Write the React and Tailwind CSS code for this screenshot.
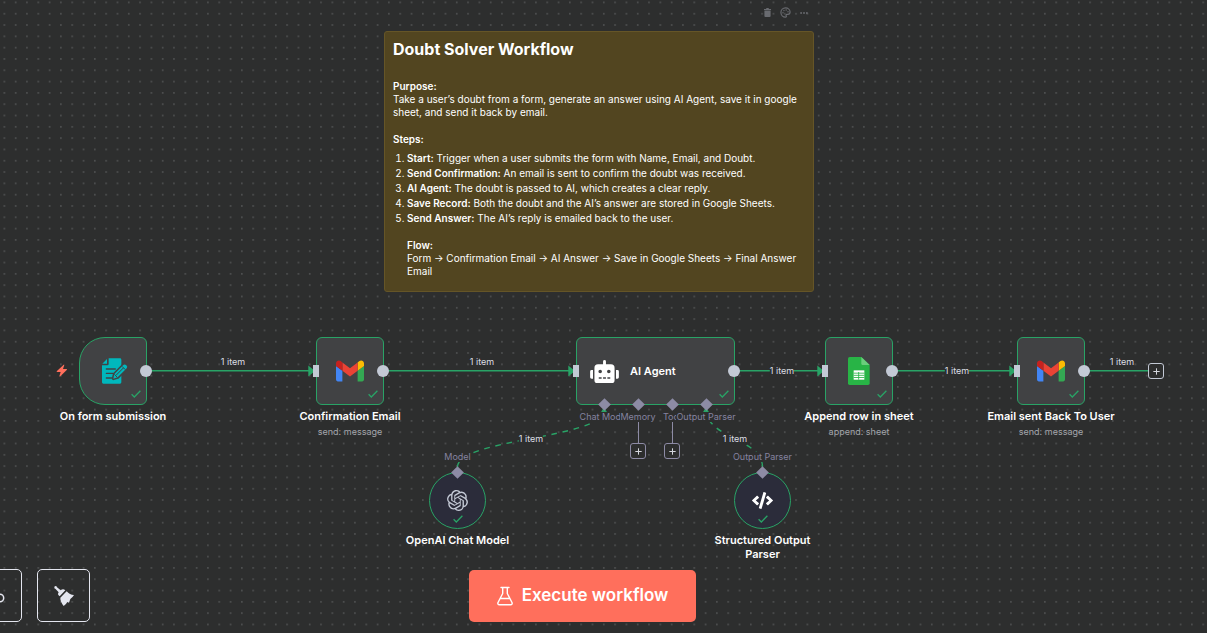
import { FaRobot, FaCode } from "react-icons/fa";
import { SiOpenai } from "react-icons/si";
import { Palette, Ellipsis } from "lucide-react";
import clsx from "clsx";

function DotGrid() {
  return (
    <svg className="absolute inset-0 size-full" aria-hidden="true">
      <defs>
        <pattern id="dots" width="11.31" height="11.31" patternUnits="userSpaceOnUse" x="-1.2" y="-3.2">
          <circle cx="5.6" cy="5.6" r="0.58" fill="#858789" />
        </pattern>
      </defs>
      <rect width="100%" height="100%" fill="url(#dots)" />
    </svg>
  );
}

function Edges() {
  return (
    <svg className="absolute left-0 top-0 h-[633px] w-[1207px]" fill="none" aria-hidden="true">
      <g stroke="#29a366" strokeWidth="1.4">
        <path d="M147 370.8H310M384 370.8H570M735 370.8H819M893 370.8H1011M1085 370.8H1148" />
        <path d="M457.5 467C457.5 438.5 604.5 438.5 604.5 410" strokeDasharray="5.7 5.7" />
        <path d="M762.5 467C762.5 438.5 706.5 438.5 706.5 410" strokeDasharray="5.7 5.7" />
      </g>
      <g fill="#29a366">
        <path d="M308.300 365.500L315 371L308.300 376.500ZM568.300 365.500L575 371L568.300 376.500ZM817.300 365.500L824 371L817.300 376.500ZM1009.300 365.500L1016 371L1009.300 376.500Z" />
        <path d="M600.500 413L604 407L607.500 413ZM702.500 413L706 407L709.500 413Z" />
      </g>
    </svg>
  );
}

function Check({ className }) {
  return (
    <svg className={clsx("absolute h-2 w-[10px]", className)} viewBox="0 0 10 8" fill="none" aria-hidden="true">
      <path d="M0.600 4.300L3.300 7L9.400 0.700" stroke="#29a366" strokeWidth="1.3" />
    </svg>
  );
}

function Diamond() {
  return <span className="size-[9px] shrink-0 rotate-45 bg-[#8d8ba5]" />;
}

function Input() {
  return <span className="absolute -left-1 top-[27px] h-3 w-[6px] bg-[#c3c9d5]" />;
}

function Output() {
  return <span className="absolute -right-[6px] top-[27px] size-3 rounded-full bg-[#c3c9d5]" />;
}

function Node({ className, shape = "rounded-md", title, subtitle, input = true, children }) {
  return (
    <div className={clsx("absolute top-[337px] flex w-40 flex-col items-center text-center", className)}>
      <div className={clsx("relative flex size-[68px] items-center justify-center border border-[#29a366] bg-[#414244]", shape)}>
        {children}
        {input && <Input />}
        <Output />
        <Check className="bottom-[6px] right-[5px]" />
      </div>
      <div className="mt-1 text-[11px] font-semibold leading-[14px] text-white">{title}</div>
      {subtitle && <div className="mt-[3px] text-[9px] leading-3 text-[#a3a5ab]">{subtitle}</div>}
    </div>
  );
}

function SubNode({ className, port, title, children }) {
  return (
    <div className={clsx("absolute top-[452px] flex w-[121px] flex-col items-center text-center", className)}>
      <div className="bg-[#2d2e2e] text-[9px] leading-[10px] text-[#8583a0]">{port}</div>
      <div className="relative mt-[10px] flex size-[57px] items-center justify-center rounded-full border border-[#29a366] bg-[#2b2c3a]">
        {children}
        <span className="absolute inset-x-0 -top-[5px] flex justify-center">
          <Diamond />
        </span>
        <Check className="bottom-[5px] left-[23px]" />
      </div>
      <div className="mt-1 text-[11px] font-semibold leading-[14px] text-white">{title}</div>
    </div>
  );
}

function EdgeLabel({ className }) {
  return (
    <span className={clsx("absolute -translate-x-1/2 whitespace-nowrap bg-[#2d2e2e] text-[9px] leading-3 text-[#dcdee4]", className)}>
      1 item
    </span>
  );
}

function AddButton({ className, label }) {
  return (
    <button type="button" aria-label={label} className={clsx("flex size-4 shrink-0 items-center justify-center rounded-[3px] border bg-[#2d2e2e]", className)}>
      <svg className="size-[7px]" viewBox="0 0 7 7" aria-hidden="true">
        <path d="M3.500 0.300V6.700M0.300 3.500H6.700" stroke="#d5d7de" strokeWidth="1" />
      </svg>
    </button>
  );
}

function Port({ label, addLabel }) {
  return (
    <li className="flex w-[34px] flex-col items-center">
      <Diamond />
      <span className="mt-[3px] whitespace-nowrap bg-[#2d2e2e] text-[9px] leading-[10px] text-[#8583a0]">{label}</span>
      {addLabel && (
        <>
          <span className="h-[21px] w-px bg-[#8d8ba5]" />
          <AddButton label={addLabel} className="border-[#8d8ba5]" />
        </>
      )}
    </li>
  );
}

function AgentNode() {
  return (
    <div className="absolute left-[576px] top-[337px] flex h-[68px] w-[159px] items-center gap-[11px] rounded-md border border-[#29a366] bg-[#414244] pl-[13px]">
      <FaRobot className="h-[23px] w-[29px] text-white" />
      <span className="text-[11px] font-semibold leading-[14px] text-white">AI Agent</span>
      <Input />
      <Output />
      <Check className="bottom-[6px] right-[5px]" />
      <ul className="absolute left-[10px] top-[62px] flex">
        <Port label="Chat Model" />
        <Port label="Memory" addLabel="Add memory" />
        <Port label="Tool" addLabel="Add tool" />
        <Port label="Output Parser" />
      </ul>
    </div>
  );
}

function GmailIcon() {
  return (
    <svg className="h-[22px] w-7" viewBox="52 42 88 66" aria-hidden="true">
      <path fill="#4285f4" d="M58 108h14V74L52 59v43c0 3.320 2.690 6 6 6" />
      <path fill="#34a853" d="M120 108h14c3.320 0 6-2.690 6-6V59l-20 15" />
      <path fill="#fbbc04" d="M120 48v26l20-15v-8c0-7.420-8.470-11.650-14.400-7.200" />
      <path fill="#ea4335" d="M72 74V48l24 18 24-18v26L96 92" />
      <path fill="#c5221f" d="M52 51v8l20 15V48l-5.600-4.200c-5.940-4.450-14.400-.220-14.400 7.200" />
    </svg>
  );
}

function FormIcon() {
  return (
    <svg className="size-[26px]" viewBox="0 0 78 78" aria-hidden="true">
      <path fill="#00b7bc" d="M20 1H54Q58 1 58 5V73Q58 77 54 77H4Q0 77 0 73V22H16Q20 22 20 18Z" />
      <path fill="#00b7bc" d="M15 3V17H1Z" />
      <path d="M13 33H40M13 46H33M13 60H29" stroke="#414244" strokeWidth="4" strokeLinecap="round" />
      <path d="M34 62L37 48L64 21Q68 17 73 22Q78 27 74 31L47 58Z" fill="#00b7bc" stroke="#414244" strokeWidth="9" strokeLinejoin="round" />
      <path d="M34 62L37 48L64 21Q68 17 73 22Q78 27 74 31L47 58Z" fill="#00b7bc" />
      <path d="M42 52L64 30M60 25L70 35M37 49L46 58" stroke="#414244" strokeWidth="3" />
    </svg>
  );
}

function SheetIcon() {
  return (
    <svg className="h-7 w-[22px]" viewBox="0 0 66 84" aria-hidden="true">
      <path fill="#28b446" d="M5 0H40L65 24V79Q65 84 60 84H5Q0 84 0 79V5Q0 0 5 0Z" />
      <path fill="#6ace7c" d="M40 0L65 24H44Q40 24 40 20Z" />
      <path fill="#fff" d="M17 40H49V68H17Z" />
      <path d="M17 48.500H49M17 55H49M17 61.500H49M32 45V68" stroke="#28b446" strokeWidth="2.500" />
    </svg>
  );
}

function Note() {
  return (
    <section className="absolute left-[384px] top-[31px] w-[430px] rounded-[3px] border border-[#655527] bg-[#524520] px-2 pb-[13px] pt-[7px] text-[10px] leading-[13px] text-white">
      <h1 className="text-[16px] font-bold leading-5">Doubt Solver Workflow</h1>
      <p className="mt-[21px]">
        <strong className="font-semibold">Purpose:</strong>
        <br />
        Take a user’s doubt from a form, generate an answer using AI Agent, save it in google sheet, and send it back by email.
      </p>
      <p className="mt-[14px] font-semibold">Steps:</p>
      <ol className="mt-[5px] list-decimal pl-[14px] leading-[15px]">
        <li><strong className="font-semibold">Start:</strong> Trigger when a user submits the form with Name, Email, and Doubt.</li>
        <li><strong className="font-semibold">Send Confirmation:</strong> An email is sent to confirm the doubt was received.</li>
        <li><strong className="font-semibold">AI Agent:</strong> The doubt is passed to AI, which creates a clear reply.</li>
        <li><strong className="font-semibold">Save Record:</strong> Both the doubt and the AI’s answer are stored in Google Sheets.</li>
        <li>
          <strong className="font-semibold">Send Answer:</strong> The AI’s reply is emailed back to the user.
          <p className="mt-[13px] leading-[13px]">
            <strong className="font-semibold">Flow:</strong>
            <br />
            Form → Confirmation Email → AI Answer → Save in Google Sheets → Final Answer Email
          </p>
        </li>
      </ol>
    </section>
  );
}

function NoteToolbar() {
  return (
    <div className="absolute left-[763px] top-[7px] flex items-center gap-2 text-[#696b70]">
      <button type="button" aria-label="Delete note" className="flex w-[9px] justify-center">
        <svg className="h-[9px] w-[7px]" viewBox="0 0 7 9" fill="currentColor" aria-hidden="true">
          <path d="M0 1H2L2.500 0H4.500L5 1H7V2H0ZM0.400 2.500H6.600V8Q6.600 9 5.600 9H1.400Q0.400 9 0.400 8Z" />
        </svg>
      </button>
      <button type="button" aria-label="Change colour"><Palette size={11} strokeWidth={2.5} /></button>
      <button type="button" aria-label="More options"><Ellipsis size={10} strokeWidth={2.5} /></button>
    </div>
  );
}

function Toolbar() {
  return (
    <>
      <div className="absolute bottom-[11px] -left-[31px] flex gap-[15px]">
        <button type="button" aria-label="Reset zoom" className="flex size-[53px] items-center justify-center rounded-[5px] border border-[#e4e6ef] pt-1">
          <svg className="h-5 w-4 overflow-visible" viewBox="0 0 16 20" fill="none" aria-hidden="true">
            <circle cx="12" cy="10" r="3.700" stroke="#e4e6ef" strokeWidth="1.500" />
          </svg>
        </button>
        <button type="button" aria-label="Tidy up" className="flex size-[53px] items-center justify-center rounded-[5px] border border-[#e4e6ef]">
          <svg className="size-5" viewBox="0 0 60 60" fill="#e4e6ef" aria-hidden="true">
            <path d="M1 5Q0 1 5 0Q8 0 9 4L20 13Q27 6 34 13L17 31Q9 26 14 19L4 8Q1 8 1 5Z" />
            <path d="M38 16L19 35Q18 45 29 60Q36 56 40 48L45 50L49 39Q56 34 60 27Q47 27 38 16Z" />
          </svg>
        </button>
      </div>
      <div className="pointer-events-none absolute inset-x-0 bottom-[11px] flex justify-center pr-[42px]">
        <button type="button" className="pointer-events-auto flex h-[52px] items-center gap-[9px] rounded-[5px] bg-[#ff6f5c] px-7 text-[17px] font-semibold text-white">
          <svg className="h-5 w-4" viewBox="0 0 16 20" fill="none" stroke="currentColor" strokeWidth="1.400" strokeLinecap="round" strokeLinejoin="round" aria-hidden="true">
            <path d="M4 1.500H12M5.700 1.500V7.500L1 16.500Q0.300 18.800 2.500 18.800H13.500Q15.700 18.800 15 16.500L10.300 7.500V1.500M3.500 12.500H12.500" />
          </svg>
          Execute workflow
        </button>
      </div>
    </>
  );
}

export default function App() {
  return (
    <main className="relative h-screen w-full overflow-hidden bg-[#2d2e2e] font-['Inter',sans-serif]">
      <DotGrid />
      <Edges />
      <NoteToolbar />
      <Note />

      <svg className="absolute left-14 top-[364px] h-[13px] w-3" viewBox="0 0 36 39" aria-hidden="true">
        <path fill="#ff6f5c" d="M23 2L2 22Q1 24 4 24H14L10 37Q11 38 13 37L33 17Q34 15 31 15H21L25 3Q25 1 23 2Z" />
      </svg>

      <EdgeLabel className="left-[233px] top-[356px]" />
      <EdgeLabel className="left-[482px] top-[356px]" />
      <EdgeLabel className="left-[782px] top-[365px]" />
      <EdgeLabel className="left-[957px] top-[365px]" />
      <EdgeLabel className="left-[1122px] top-[356px]" />
      <EdgeLabel className="left-[531px] top-[433px]" />
      <EdgeLabel className="left-[735px] top-[433px]" />

      <Node className="left-[33px]" shape="rounded-l-[26px] rounded-r-md pl-1" title="On form submission" input={false}>
        <FormIcon />
      </Node>
      <Node className="left-[270px]" title="Confirmation Email" subtitle="send: message">
        <GmailIcon />
      </Node>
      <AgentNode />
      <Node className="left-[779px]" title="Append row in sheet" subtitle="append: sheet">
        <SheetIcon />
      </Node>
      <Node className="left-[971px]" title="Email sent Back To User" subtitle="send: message">
        <GmailIcon />
      </Node>
      <AddButton label="Add node" className="absolute left-[1148px] top-[363px] border-[#c3c9d5]" />

      <SubNode className="left-[397px]" port="Model" title="OpenAI Chat Model">
        <SiOpenai className="size-[21px] text-[#c3c9d5]" />
      </SubNode>
      <SubNode className="left-[702px]" port="Output Parser" title="Structured Output Parser">
        <FaCode className="h-[17px] w-[21px] text-white" />
      </SubNode>

      <Toolbar />
    </main>
  );
}
